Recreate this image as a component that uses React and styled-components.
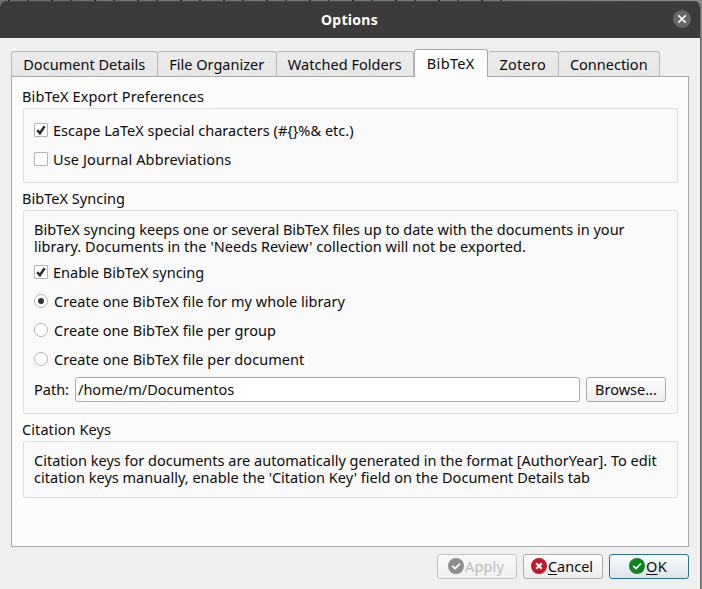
import React from 'react';
import styled, { createGlobalStyle, css } from 'styled-components';

const GlobalStyle = createGlobalStyle`
  *, *::before, *::after { box-sizing: border-box; }
  body { margin: 0; overflow: hidden; background: #858585; }
`;

const Desktop = styled.div`
  width: 702px;
  height: 589px;
  padding-top: 1px;
  background:
    repeating-linear-gradient(90deg, transparent 0 8px, #222 8px 10px, transparent 10px 27px, #333 27px 29px, transparent 29px 43px) 0 0 / 510px 1px no-repeat,
    linear-gradient(90deg, #6f6f6d, #777775 70%, #8a8a8a);
  font: 14.5px/17px "Noto Sans", "Open Sans", sans-serif;
  color: #0c0c0c;
`;

const Window = styled.main`
  display: flex;
  flex-direction: column;
  width: 701px;
  height: 588px;
  border-right: 1px solid #6b6b6b;
  border-radius: 6px 6px 0 0;
  background: #efefef;
  overflow: hidden;
`;

const TitleBar = styled.header`
  display: grid;
  grid-template-columns: 1fr auto 1fr;
  align-items: center;
  flex: none;
  height: 37px;
  padding: 0 9px 2px 8px;
  background: #3d3b39;
  border-top: 1px solid #494846;
`;

const Title = styled.h1`
  grid-column: 2;
  margin: 0;
  font-size: 14px;
  line-height: 17px;
  font-weight: 700;
  letter-spacing: 0.3px;
  color: #fff;
`;

const CloseButton = styled.button`
  justify-self: end;
  width: 18px;
  height: 18px;
  padding: 0;
  border: 0;
  border-radius: 50%;
  background: #686765;
  svg { display: block; }
`;

const Body = styled.div`
  display: flex;
  flex-direction: column;
  padding: 11px 11px 0;
`;

const TabRow = styled.nav`
  display: flex;
  align-items: flex-end;
  height: 27px;
  position: relative;
  z-index: 1;
`;

const Tab = styled.button`
  flex: none;
  width: ${p => p.$width}px;
  height: 25px;
  padding: 4px 0.5px 3px 0;
  border: 1px solid #b9b9b9;
  border-left-width: ${p => (p.$joined ? 0 : 1)}px;
  border-bottom: 0;
  border-radius: 3px 3px 0 0;
  background: linear-gradient(#ebebeb, #e6e6e6);
  font: inherit;
  letter-spacing: ${p => p.$spacing || 0}px;
  color: inherit;
  white-space: nowrap;
  ${p => p.$active && css`
    height: 28px;
    padding-bottom: 5px;
    margin-bottom: -1px;
    border-color: #a9a9a9;
    background: linear-gradient(#fff, #fcfcfc);
  `}
`;

const Panel = styled.section`
  height: 471px;
  padding: 11px 10px;
  border: 1px solid #a9a9a9;
  background: #fcfcfc;
`;

const GroupTitle = styled.h2`
  margin: 0 0 3px;
  font: inherit;
  letter-spacing: ${p => p.$spacing || 0}px;
`;

const Group = styled.div`
  display: flex;
  flex-direction: column;
  gap: ${p => p.$gap || 0}px;
  height: ${p => p.$height}px;
  margin: 0 0 7px 1px;
  padding: ${p => p.$top || 10}px 10px 0;
  border: 1px solid #dedede;
  border-radius: 2px;
  background: #f9f9f9;
`;

const Paragraph = styled.p`
  margin: 0;
  white-space: nowrap;
`;

const Line = styled.span`
  display: block;
  letter-spacing: ${p => p.$spacing || 0}px;
`;

const Options = styled.div`
  display: flex;
  flex-direction: column;
  gap: 12px;
`;

const OptionRow = styled.label`
  display: flex;
  gap: ${p => (p.$radio ? 6 : 5)}px;
  height: 17px;
  letter-spacing: ${p => p.$spacing || 0}px;
  white-space: nowrap;
`;

const Box = styled.span`
  display: grid;
  place-items: center;
  flex: none;
  width: 14px;
  height: 14px;
  margin-top: 1px;
  border: 1px solid #b4b4b4;
  border-radius: ${p => (p.$round ? '50%' : '1px')};
  background: #fff;
`;

const Dot = styled.span`
  width: 6px;
  height: 6px;
  border-radius: 50%;
  background: #333;
`;

const PathRow = styled.div`
  display: flex;
  align-items: center;
  height: 25px;
`;

const PathLabel = styled.label`
  width: 41px;
`;

const PathInput = styled.input`
  width: 505px;
  height: 25px;
  margin-right: 6px;
  padding: 0 2px 1px;
  border: 1px solid #ababab;
  border-radius: 3px;
  background: #fff;
  font: inherit;
  color: inherit;
  outline: 0;
`;

const Button = styled.button`
  display: flex;
  align-items: center;
  justify-content: center;
  flex: none;
  width: 80px;
  height: 25px;
  padding: 0;
  border: 1px solid ${p => (p.$primary ? '#2a7399' : p.disabled ? '#c4c4c4' : '#ababab')};
  border-radius: 3px;
  background: ${p => (p.$primary
    ? 'linear-gradient(#fafcfd, #dbe4eb)'
    : p.disabled ? 'linear-gradient(#f8f8f8, #f0f0f0)' : 'linear-gradient(#fdfdfd, #ededed)')};
  font: inherit;
  color: ${p => (p.disabled ? '#bebebe' : 'inherit')};
  svg { flex: none; margin: -1px 1px 0 -2px; }
`;

const Caption = styled.span`
  letter-spacing: ${p => p.$spacing || 0}px;
`;

const Mnemonic = styled.span`
  text-decoration: underline 1px;
  text-underline-offset: 2px;
  text-decoration-skip-ink: none;
`;

const Footer = styled.footer`
  display: flex;
  justify-content: flex-end;
  gap: 6px;
  padding-top: 7px;
`;

const CheckMark = () => (
  <svg width="12" height="12" viewBox="0 0 12 12" fill="none">
    <path d="M2.2 6.2 4.9 9.2 9.6 2.2" stroke="#2d2d2d" strokeWidth="2.5" />
  </svg>
);

const StatusIcon = ({ color, cross }) => (
  <svg width="16" height="16" viewBox="0 0 16 16" fill="none">
    <circle cx="8" cy="8" r="8" fill={color} />
    <path
      d={cross ? 'M5.2 5.2 10.8 10.8M10.8 5.2 5.2 10.8' : 'M4.2 7.8 7 10.5 12 5.5'}
      stroke="#fff"
      strokeWidth={cross ? 2.1 : 1.7}
    />
  </svg>
);

const Option = ({ radio, checked, spacing, children }) => (
  <OptionRow $radio={radio} $spacing={spacing}>
    <Box $round={radio}>{checked && (radio ? <Dot /> : <CheckMark />)}</Box>
    {children}
  </OptionRow>
);

const tabs = [
  { label: 'Document Details', width: 147, spacing: 0.03 },
  { label: 'File Organizer', width: 119 },
  { label: 'Watched Folders', width: 137, spacing: 0.04 },
  { label: 'BibTeX', width: 74, spacing: 0.36, active: true },
  { label: 'Zotero', width: 71, spacing: 0.25 },
  { label: 'Connection', width: 101 },
];

export default function App() {
  return (
    <Desktop>
      <GlobalStyle />
      <Window>
        <TitleBar>
          <Title>Options</Title>
          <CloseButton aria-label="Close">
            <svg width="18" height="18" viewBox="0 0 18 18" fill="none">
              <path d="M5.4 5.4 12.6 12.6M12.6 5.4 5.4 12.6" stroke="#fff" strokeWidth="1.5" />
            </svg>
          </CloseButton>
        </TitleBar>
        <Body>
          <TabRow>
            {tabs.map((t, i) => (
              <Tab key={t.label} $width={t.width} $spacing={t.spacing} $active={t.active}
                $joined={i > 0 && !t.active}>
                {t.label}
              </Tab>
            ))}
          </TabRow>
          <Panel>
            <GroupTitle $spacing={0.13}>BibTeX Export Preferences</GroupTitle>
            <Group $height={75} $top={13}>
              <Options>
                <Option checked spacing={0.03}>{'Escape LaTeX special characters (#{}%& etc.)'}</Option>
                <Option spacing={0.12}>Use Journal Abbreviations</Option>
              </Options>
            </Group>
            <GroupTitle $spacing={0.04}>BibTeX Syncing</GroupTitle>
            <Group $height={204} $gap={9}>
              <Paragraph>
                <Line>BibTeX syncing keeps one or several BibTeX files up to date with the documents in your</Line>
                <Line $spacing={0.045}>library. Documents in the 'Needs Review' collection will not be exported.</Line>
              </Paragraph>
              <Options>
                <Option checked>Enable BibTeX syncing</Option>
                <Option radio checked spacing={0.053}>Create one BibTeX file for my whole library</Option>
                <Option radio spacing={0.058}>Create one BibTeX file per group</Option>
                <Option radio spacing={0.055}>Create one BibTeX file per document</Option>
              </Options>
              <PathRow>
                <PathLabel htmlFor="path">Path:</PathLabel>
                <PathInput id="path" defaultValue="/home/m/Documentos" />
                <Button><Caption>Browse...</Caption></Button>
              </PathRow>
            </Group>
            <GroupTitle $spacing={0.08}>Citation Keys</GroupTitle>
            <Group $height={57}>
              <Paragraph>
                <Line>Citation keys for documents are automatically generated in the format [AuthorYear]. To edit</Line>
                <Line $spacing={0.018}>citation keys manually, enable the 'Citation Key' field on the Document Details tab</Line>
              </Paragraph>
            </Group>
          </Panel>
          <Footer>
            <Button disabled>
              <StatusIcon color="#8e8e8e" />
              <Caption $spacing={0.15}>Apply</Caption>
            </Button>
            <Button>
              <StatusIcon color="#c7162b" cross />
              <Caption><Mnemonic>C</Mnemonic>ancel</Caption>
            </Button>
            <Button $primary>
              <StatusIcon color="#0e8420" />
              <Caption $spacing={0.3}><Mnemonic>O</Mnemonic>K</Caption>
            </Button>
          </Footer>
        </Body>
      </Window>
    </Desktop>
  );
}
